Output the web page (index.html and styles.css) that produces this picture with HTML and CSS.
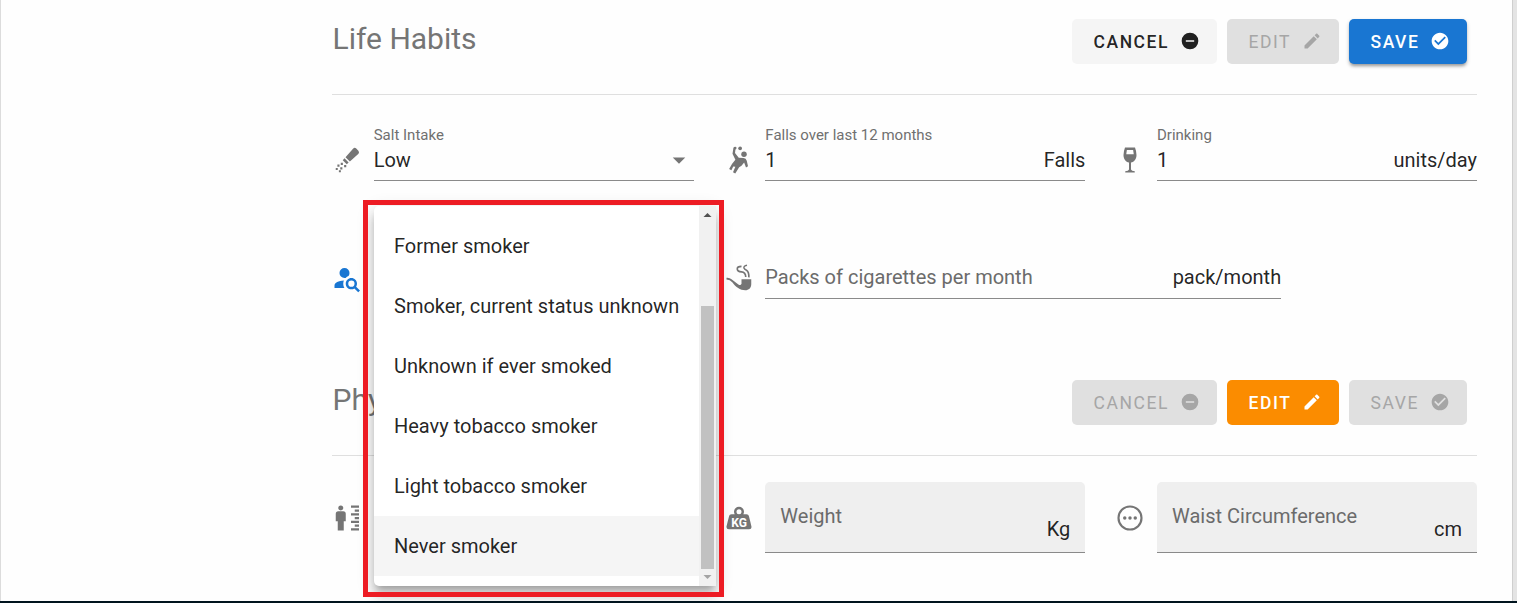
FILE: index.html
```html
<!DOCTYPE html>
<html lang="en">
<head>
<meta charset="utf-8">
<title>Life Habits</title>
<link rel="stylesheet" href="styles.css">
</head>
<body>
<svg class="defs" aria-hidden="true">
  <symbol id="minus" viewBox="0 0 24 24"><path d="M17,13H7V11H17M12,2A10,10 0 0,0 2,12A10,10 0 0,0 12,22A10,10 0 0,0 22,12A10,10 0 0,0 12,2Z"/></symbol>
  <symbol id="check" viewBox="0 0 24 24"><path d="M12 2C6.5 2 2 6.5 2 12S6.5 22 12 22 22 17.5 22 12 17.5 2 12 2M10 17L5 12L6.41 10.59L10 14.17L17.59 6.58L19 8L10 17Z"/></symbol>
  <symbol id="pencil" viewBox="0 0 24 24"><path d="M20.71,7.04C21.1,6.65 21.1,6 20.71,5.63L18.37,3.29C18,2.9 17.35,2.9 16.96,3.29L15.12,5.12L18.87,8.87M3,17.25V21H6.75L17.81,9.93L14.06,6.18L3,17.25Z"/></symbol>
</svg>
<main class="card">
  <section class="section">
    <header class="section-head">
      <h2 class="title">Life Habits</h2>
      <div class="actions">
        <button class="btn btn-cancel btn-light">CANCEL<svg class="btn-icon"><use href="#minus"/></svg></button>
        <button class="btn btn-edit btn-disabled">EDIT<svg class="btn-icon"><use href="#pencil"/></svg></button>
        <button class="btn btn-save btn-primary">SAVE<svg class="btn-icon"><use href="#check"/></svg></button>
      </div>
    </header>
    <div class="grid">
      <div class="cell">
        <svg class="icon" viewBox="0 0 24 24"><path d="M17 2.7Q18.3 1.8 19.4 2.8L21.1 4.5Q22.1 5.7 21.2 6.9L14.3 13.2L10.8 9.7ZM10 10.6L13.3 13.9L11.8 15.3L8.6 12.1ZM7 14.2h1.7v1.7H7ZM9.7 16h1.7v1.7H9.7ZM4.3 15.6H6v1.7H4.3ZM6.6 17.8h1.7v1.7H6.6ZM3 18.4h1.6v1.6H3ZM5.5 20.2h1.6V21.8H5.5Z"/></svg>
        <div class="field"><span class="label">Salt Intake</span><div class="value"><span>Low</span><svg class="caret" viewBox="0 0 24 24"><path d="M7 10l5 5 5-5z"/></svg></div></div>
      </div>
      <div class="cell">
        <svg class="icon" viewBox="0 0 24 24"><circle cx="8.9" cy="2.4" r="1.1"/><circle cx="12.9" cy="2.6" r="1.5"/><circle cx="16" cy="7.3" r="2.2"/><path d="M7.6 1.9L9.3 2.4L8.8 6.3L11.8 10.1L15.6 10.4Q17.7 10.7 18.2 12.5L19.2 17L17.6 17.9L16.1 14L14 16.6L12.1 17.8L9 22.8L7.2 21.8L9.1 17.4L7.4 17.2L5.9 20.1L4.1 19.2L6.5 14.9L9.1 11.8L6.8 7Z"/></svg>
        <div class="field"><span class="label">Falls over last 12 months</span><div class="value"><span>1</span><span>Falls</span></div></div>
      </div>
      <div class="cell">
        <svg class="icon" viewBox="0 0 24 24"><path fill-rule="evenodd" d="M8 2H16Q17.2 5.2 17.2 8C17.2 11 15.4 13.6 12.8 14V19.5Q13.2 20.7 15.8 21V22H8.2V21Q10.8 20.7 11.2 19.5V14C8.6 13.6 6.8 11 6.8 8Q6.8 5.2 8 2ZM9.5 4L9 7.4H15L14.5 4Z"/></svg>
        <div class="field"><span class="label">Drinking</span><div class="value"><span>1</span><span>units/day</span></div></div>
      </div>
    </div>
    <div class="grid grid-plain">
      <div class="cell">
        <svg class="icon icon-active" viewBox="0 0 24 24"><path d="M15.5,12C18,12 20,14 20,16.5C20,17.38 19.75,18.21 19.31,18.9L22.39,22L21,23.39L17.88,20.32C17.19,20.75 16.37,21 15.5,21C13,21 11,19 11,16.5C11,14 13,12 15.5,12M15.5,14A2.5,2.5 0 0,0 13,16.5A2.5,2.5 0 0,0 15.5,19A2.5,2.5 0 0,0 18,16.5A2.5,2.5 0 0,0 15.5,14M10,4A4,4 0 0,1 14,8C14,8.91 13.69,9.75 13.18,10.43C12.32,10.75 11.55,11.26 10.91,11.9L10,12A4,4 0 0,1 6,8A4,4 0 0,1 10,4M2,20V18C2,15.88 5.31,14.14 9.5,14C9.18,14.78 9,15.62 9,16.5C9,17.79 9.38,19 10,20H2Z"/></svg>
      </div>
      <div class="cell cell-wide">
        <svg class="icon" viewBox="0 0 24 24"><path d="M2 11.8Q4.4 11.5 6 13L11.5 17.2Q13.4 18.4 14 16.5V13H21.8V17C21.8 20 19.8 21.8 17 21.8C12.8 21.8 9.5 19.3 6.8 15.6Q4.8 13.1 2 13.1Z"/><path class="stroke" d="M14 2.7Q10.6 2.7 10.6 4.7Q10.7 7 14 7.1Q17.3 7.3 17.4 11.2M18.4 1.8Q15.6 2.3 16 4Q16.4 5 18 5.8Q20 7 19.9 11.5"/></svg>
        <div class="field"><div class="value"><span class="placeholder">Packs of cigarettes per month</span><span>pack/month</span></div></div>
      </div>
    </div>
  </section>
  <section class="section">
    <header class="section-head">
      <h2 class="title">Physical Data</h2>
      <div class="actions">
        <button class="btn btn-cancel btn-disabled">CANCEL<svg class="btn-icon"><use href="#minus"/></svg></button>
        <button class="btn btn-edit btn-warning">EDIT<svg class="btn-icon"><use href="#pencil"/></svg></button>
        <button class="btn btn-save btn-disabled">SAVE<svg class="btn-icon"><use href="#check"/></svg></button>
      </div>
    </header>
    <div class="grid grid-filled">
      <div class="cell">
        <svg class="icon" viewBox="0 0 24 24"><circle cx="7" cy="3.9" r="2"/><path d="M5 6.5H9Q11 6.5 11 8.5V14.5H9.4V22H4.6V14.5H3V8.5Q3 6.5 5 6.5ZM15.2 2H21.6V3.8H15.2ZM18.2 5.1H21.6V6.9H18.2ZM15.2 8.2H21.6V10H15.2ZM18.2 11.2H21.6V13H18.2ZM15.2 14.2H21.6V16H15.2ZM18.2 17.2H21.6V19H18.2ZM15.2 20.2H21.6V22H15.2Z"/></svg>
        <div class="filled"><span class="placeholder">Height</span><span class="suffix">cm</span></div>
      </div>
      <div class="cell">
        <svg class="icon" viewBox="0 0 24 24"><path d="M12,3A4,4 0 0,1 16,7C16,7.73 15.81,8.41 15.46,9H18C18.95,9 19.75,9.67 19.95,10.56C21.96,18.57 22,18.78 22,19A2,2 0 0,1 20,21H4A2,2 0 0,1 2,19C2,18.78 2.04,18.57 4.05,10.56C4.25,9.67 5.05,9 6,9H8.54C8.19,8.41 8,7.73 8,7A4,4 0 0,1 12,3M12,5A2,2 0 0,0 10,7A2,2 0 0,0 12,9A2,2 0 0,0 14,7A2,2 0 0,0 12,5Z"/><text class="kg" x="5.8" y="18.9" textLength="12.6" lengthAdjust="spacingAndGlyphs">KG</text></svg>
        <div class="filled"><span class="placeholder">Weight</span><span class="suffix">Kg</span></div>
      </div>
      <div class="cell">
        <svg class="icon" viewBox="0 0 24 24"><circle class="ring" cx="12" cy="12" r="9.2"/><circle cx="7.8" cy="12" r="1.4"/><circle cx="12" cy="12" r="1.4"/><circle cx="16.2" cy="12" r="1.4"/></svg>
        <div class="filled"><span class="placeholder">Waist Circumference</span><span class="suffix">cm</span></div>
      </div>
    </div>
  </section>
</main>
<div class="menu">
  <ul class="options">
    <li class="option">Former smoker</li>
    <li class="option">Smoker, current status unknown</li>
    <li class="option">Unknown if ever smoked</li>
    <li class="option">Heavy tobacco smoker</li>
    <li class="option">Light tobacco smoker</li>
    <li class="option option-selected">Never smoker</li>
  </ul>
  <div class="scrollbar">
    <svg class="arrow arrow-up" viewBox="0 0 17 17"><path d="M4.5 11L8.5 7L12.5 11Z"/></svg>
    <div class="thumb"></div>
    <svg class="arrow" viewBox="0 0 17 17"><path d="M4.5 6L8.5 10L12.5 6Z"/></svg>
  </div>
</div>
<div class="highlight"></div>
</body>
</html>
```
FILE: styles.css
```css
* { box-sizing: border-box; }
body {
  margin: 0;
  height: 603px;
  overflow: hidden;
  position: relative;
  background: #e4e4e4;
  border-bottom: 2px solid #00141e;
  font: 20px/30px Roboto, sans-serif;
  color: rgba(0, 0, 0, 0.87);
}
.defs { display: none; }
.card {
  width: 1513px;
  height: 601px;
  padding: 0 35px 0 331px;
  background: #fefefe;
  border-left: 1px solid #dcdcdc;
  border-right: 1px solid #cfcfcf;
}
.section-head {
  display: flex;
  justify-content: space-between;
  align-items: flex-start;
  height: 95px;
  padding: 19px 10px 0 0.5px;
  border-bottom: 1px solid #dfdfdf;
}
.section + .section { margin-top: 62px; }
.title {
  margin: 0;
  font-size: 30px;
  line-height: 40px;
  font-weight: 400;
  color: #757575;
}
.actions { display: flex; gap: 10px; }
.btn {
  display: flex;
  align-items: center;
  justify-content: space-between;
  height: 45px;
  padding: 0 17px 0 21.5px;
  border: 0;
  border-radius: 5px;
  font: 500 17.5px/20px Roboto, sans-serif;
  letter-spacing: 1.56px;
  color: rgba(0, 0, 0, 0.87);
}
.btn-cancel { width: 145px; }
.btn-edit { width: 112px; }
.btn-save { width: 118px; }
.btn-icon { width: 20px; height: 20px; margin-bottom: 1px; fill: currentColor; }
.btn-light { background: #f5f5f5; }
.btn-disabled { background: #e0e0e0; color: #a6a6a6; font-weight: 400; }
.btn-primary {
  background: #1976d2;
  color: #fff;
  box-shadow: 0 3px 3px -1px rgba(0, 0, 0, 0.25), 0 2px 4px rgba(0, 0, 0, 0.2);
}
.btn-warning { background: #fb8c00; color: #fff; }
.grid {
  display: grid;
  grid-template-columns: repeat(12, 1fr);
  column-gap: 30px;
  padding-top: 30px;
}
.grid-plain { padding-top: 81px; }
.grid-plain .field { padding-bottom: 6px; }
.grid-filled { padding-top: 26px; }
.cell { grid-column: span 4; display: flex; align-items: flex-end; }
.cell-wide { grid-column: span 6; }
.icon {
  flex: none;
  width: 30px;
  height: 30px;
  margin: 0 11.7px 6px 0;
  fill: #757575;
}
.icon-active { fill: #1976d2; }
.grid-filled .icon { margin-bottom: 20px; }
.stroke { fill: none; stroke: #757575; stroke-width: 1.3; }
.ring { fill: none; stroke: #757575; stroke-width: 1.7; }
.kg { fill: #fff; font: bold 10.5px/1 Roboto, sans-serif; }
.field { flex: 1; border-bottom: 1px solid #8a8a8a; padding-bottom: 5px; }
.label {
  display: block;
  font-size: 15px;
  line-height: 20px;
  color: #707070;
}
.value { display: flex; justify-content: space-between; }
.placeholder { color: #6b6b6b; }
.caret { width: 30px; height: 30px; fill: #757575; }
.filled {
  flex: 1;
  display: flex;
  justify-content: space-between;
  height: 71px;
  padding: 19px 15px 0;
  background: #efefef;
  border-bottom: 1px solid #8a8a8a;
  border-radius: 5px 5px 0 0;
}
.suffix { padding-top: 13px; }
.menu {
  position: absolute;
  left: 374px;
  top: 206px;
  width: 342px;
  height: 380px;
  display: flex;
  background: #fff;
  border-radius: 5px;
  box-shadow: 0 6px 6px -3px rgba(0, 0, 0, 0.2), 0 10px 12px 1px rgba(0, 0, 0, 0.14), 0 4px 17px 2px rgba(0, 0, 0, 0.12);
}
.options { flex: 1; margin: 0; padding: 10px 0; list-style: none; }
.option { height: 60px; padding: 15px 0 15px 20px; white-space: nowrap; }
.option-selected { background: #f5f5f5; }
.scrollbar {
  width: 17px;
  display: flex;
  flex-direction: column;
  align-items: center;
  background: #f1f1f1;
}
.thumb { width: 13px; height: 263px; margin-top: 83px; background: #c1c1c1; }
.arrow { width: 17px; height: 17px; fill: #a3a3a3; }
.arrow-up { fill: #505050; }
.highlight {
  position: absolute;
  left: 363px;
  top: 200px;
  width: 361px;
  height: 397px;
  border: 5px solid #ed1c24;
}
```
